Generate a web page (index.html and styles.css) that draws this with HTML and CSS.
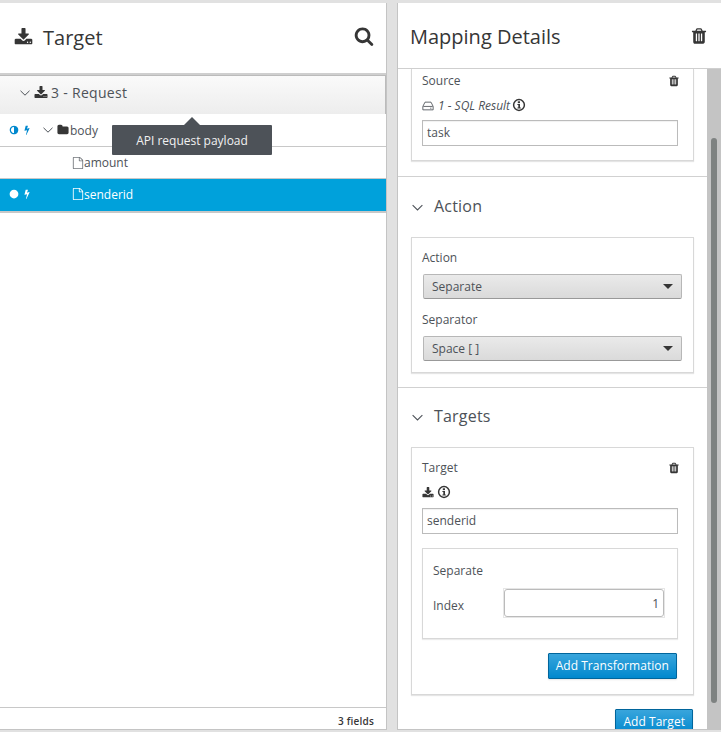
FILE: index.html
```html
<!DOCTYPE html>
<html lang="en">
<head>
  <meta charset="UTF-8">
  <title>Data Mapper</title>
  <link rel="stylesheet" href="styles.css">
</head>
<body>

<svg class="sprites" width="0" height="0">
  <symbol id="i-download" viewBox="0 0 1792 1792"><path d="M1344 1344q0-26-19-45t-45-19-45 19-19 45 19 45 45 19 45-19 19-45zm256 0q0-26-19-45t-45-19-45 19-19 45 19 45 45 19 45-19 19-45zm128-224v320q0 40-28 68t-68 28h-1472q-40 0-68-28t-28-68v-320q0-40 28-68t68-28h465l135 136q58 56 136 56t136-56l136-136h464q40 0 68 28t28 68zm-325-569q17 41-14 70l-448 448q-18 19-45 19t-45-19l-448-448q-31-29-14-70 17-39 59-39h256v-448q0-26 19-45t45-19h256q26 0 45 19t19 45v448h256q42 0 59 39z"/></symbol>
  <symbol id="i-search" viewBox="0 0 1792 1792"><path d="M1216 832q0-185-131.5-316.5t-316.5-131.5-316.5 131.5-131.5 316.5 131.5 316.5 316.5 131.5 316.5-131.5 131.5-316.5zm512 832q0 52-38 90t-90 38q-54 0-90-38l-343-342q-179 124-399 124-143 0-273.5-55.5t-225-150-150-225-55.5-273.5 55.5-273.5 150-225 225-150 273.5-55.5 273.5 55.5 225 150 150 225 55.5 273.5q0 220-124 399l343 343q37 37 37 90z"/></symbol>
  <symbol id="i-trash" viewBox="0 0 1792 1792"><path d="M704 1376v-704q0-14-9-23t-23-9h-64q-14 0-23 9t-9 23v704q0 14 9 23t23 9h64q14 0 23-9t9-23zm256 0v-704q0-14-9-23t-23-9h-64q-14 0-23 9t-9 23v704q0 14 9 23t23 9h64q14 0 23-9t9-23zm256 0v-704q0-14-9-23t-23-9h-64q-14 0-23 9t-9 23v704q0 14 9 23t23 9h64q14 0 23-9t9-23zm-544-992h448l-48-117q-7-9-17-11h-317q-10 2-17 11zm928 32v64q0 14-9 23t-23 9h-96v948q0 83-47 143.5t-113 60.5h-832q-66 0-113-58.5t-47-141.5v-952h-96q-14 0-23-9t-9-23v-64q0-14 9-23t23-9h309l70-167q15-37 54-63t79-26h320q40 0 79 26t54 63l70 167h309q14 0 23 9t9 23z"/></symbol>
  <symbol id="i-folder" viewBox="0 0 1792 1792"><path d="M1728 608v704q0 92-66 158t-158 66h-1216q-92 0-158-66t-66-158v-960q0-92 66-158t158-66h320q92 0 158 66t66 158v32h672q92 0 158 66t66 158z"/></symbol>
  <symbol id="i-bolt" viewBox="0 0 1792 1792"><path d="M1333 566q18 20 7 44l-540 1157q-13 25-42 25-4 0-14-2-17-5-25.5-19t-4.5-30l197-808-406 101q-4 1-12 1-18 0-31-11-18-15-13-39l201-825q4-14 16-23t28-9h328q19 0 32 12.5t13 29.5q0 8-5 18l-171 463 396-98q8-2 12-2 19 0 34 15z"/></symbol>
  <symbol id="i-half" viewBox="0 0 1792 1792"><path d="M896 1440v-1088q-148 0-273 73t-198 198-73 273 73 273 198 198 273 73zm768-544q0 209-103 385.5t-279.5 279.5-385.5 103-385.5-103-279.5-279.5-103-385.5 103-385.5 279.5-279.5 385.5-103 385.5 103 279.5 279.5 103 385.5z"/></symbol>
  <symbol id="i-file" viewBox="0 0 1792 1792"><path d="M1596 380q28 28 48 76t20 88v1152q0 40-28 68t-68 28h-1344q-40 0-68-28t-28-68v-1600q0-40 28-68t68-28h896q40 0 88 20t76 48zm-444-244v376h376q-10-29-22-41l-313-313q-12-12-41-22zm384 1528v-1024h-416q-40 0-68-28t-28-68v-416h-768v1536h1280z"/></symbol>
  <symbol id="i-circle" viewBox="0 0 16 16"><circle cx="8" cy="8" r="7"/></symbol>
  <symbol id="i-info" viewBox="0 0 14 14"><circle cx="7" cy="7" r="5.4" fill="none" stroke="currentColor" stroke-width="1.5"/><rect x="5.8" y="3.3" width="2.2" height="1.8"/><path d="M5.4 6h2.6v3.4h.8v1H5.400v-1h.9V7h-.9z"/></symbol>
  <symbol id="i-hdd" viewBox="0 0 14 14"><path d="M3.5 2.500h7L13 7.500v4h-12v-4zM1.500 7.500h11M9.500 9.500h1.500" fill="none" stroke="currentColor" stroke-width="1"/></symbol>
  <symbol id="i-angle" viewBox="0 0 12 12"><path d="M1.500 3.800 6 8.200l4.500-4.400" fill="none" stroke="currentColor" stroke-width="1"/></symbol>
</svg>

<div class="layout">

  <section class="panel target-panel">
    <header class="panel-head target-head">
      <svg class="icon head-icon"><use href="#i-download"/></svg>
      <h1>Target</h1>
      <svg class="icon search-icon"><use href="#i-search"/></svg>
    </header>

    <div class="tree">
      <div class="doc-row">
        <svg class="icon angle-sm"><use href="#i-angle"/></svg>
        <svg class="icon doc-icon"><use href="#i-download"/></svg>
        <span>3 - Request</span>
      </div>

      <div class="field-row body-row">
        <svg class="icon status blue"><use href="#i-half"/></svg>
        <svg class="icon bolt blue"><use href="#i-bolt"/></svg>
        <svg class="icon angle-sm body-angle"><use href="#i-angle"/></svg>
        <svg class="icon folder"><use href="#i-folder"/></svg>
        <span>body</span>
      </div>

      <div class="field-row leaf">
        <svg class="icon file"><use href="#i-file"/></svg>
        <span>amount</span>
      </div>

      <div class="field-row selected">
        <svg class="icon status dot"><use href="#i-circle"/></svg>
        <svg class="icon bolt"><use href="#i-bolt"/></svg>
        <svg class="icon file leaf-file"><use href="#i-file"/></svg>
        <span>senderid</span>
      </div>

      <div class="tooltip">API request payload</div>
    </div>

    <footer class="tree-foot">3 fields</footer>
  </section>

  <section class="panel details-panel">
    <header class="panel-head details-head">
      <h1>Mapping Details</h1>
      <svg class="icon head-trash"><use href="#i-trash"/></svg>
    </header>

    <div class="details-body">
      <div class="details-scroll">

        <div class="group group-source">
          <div class="card card-source">
            <div class="card-title">
              <span>Source</span>
              <svg class="icon card-trash"><use href="#i-trash"/></svg>
            </div>
            <div class="doc-line">
              <svg class="icon hdd"><use href="#i-hdd"/></svg>
              <em>1 - SQL Result</em>
              <svg class="icon info"><use href="#i-info"/></svg>
            </div>
            <input class="text-field" type="text" value="task">
          </div>
        </div>

        <div class="group">
          <h2><svg class="icon angle-lg"><use href="#i-angle"/></svg>Action</h2>
          <div class="card card-action">
            <label>Action</label>
            <div class="select"><span>Separate</span><i class="caret"></i></div>
            <label class="label-gap">Separator</label>
            <div class="select"><span>Space [ ]</span><i class="caret"></i></div>
          </div>
        </div>

        <div class="group group-targets">
          <h2><svg class="icon angle-lg"><use href="#i-angle"/></svg>Targets</h2>
          <div class="card card-target">
            <div class="card-title">
              <span>Target</span>
              <svg class="icon card-trash"><use href="#i-trash"/></svg>
            </div>
            <div class="doc-line target-line">
              <svg class="icon dl-small"><use href="#i-download"/></svg>
              <svg class="icon info"><use href="#i-info"/></svg>
            </div>
            <input class="text-field" type="text" value="senderid">

            <div class="transform">
              <div class="transform-name">Separate</div>
              <div class="transform-row">
                <label>Index</label>
                <div class="num-wrap"><input class="num-field" type="text" value="1"></div>
              </div>
            </div>

            <div class="btn-row"><button class="btn">Add Transformation</button></div>
          </div>
          <div class="btn-row target-btn"><button class="btn">Add Target</button></div>
        </div>

      </div>

      <div class="scrollbar"><div class="thumb"></div></div>
    </div>
  </section>

</div>

</body>
</html>
```

FILE: styles.css
```css
html, body {
  height: 100%;
}
body {
  margin: 0;
  background: #e1e1e1;
  color: #363636;
  font-family: 'Open Sans', sans-serif;
  font-size: 12px;
  overflow: hidden;
}
.sprites {
  position: absolute;
}
.icon {
  display: block;
  flex: none;
  fill: currentColor;
}
.layout {
  display: flex;
  height: 732px;
  box-sizing: border-box;
  padding: 3px 0 2px;
  gap: 10px;
}
.panel {
  display: flex;
  flex-direction: column;
  background: white;
  box-sizing: border-box;
  border-bottom: 1px solid #c4c4c4;
}
.target-panel {
  width: 387px;
  border-right: 1px solid #c4c4c4;
}
.details-panel {
  width: 324px;
  border-left: 1px solid #c4c4c4;
}
.panel-head {
  display: flex;
  align-items: center;
  flex: none;
}
h1 {
  margin: 0;
  font-size: 20px;
  font-weight: 400;
  color: #363636;
}
.target-head {
  height: 72px;
  padding: 0 12px 2px 14px;
  border-bottom: 2px solid #cfcfcf;
  box-sizing: border-box;
}
.head-icon {
  width: 19px;
  height: 19px;
  margin-right: 10px;
}
.search-icon {
  width: 20px;
  height: 20px;
  margin-left: auto;
  margin-top: -2px;
}

/* tree */
.tree {
  position: relative;
  flex: 1;
}
.doc-row {
  display: flex;
  align-items: center;
  height: 39px;
  box-sizing: border-box;
  padding: 0 0 5px 19px;
  font-size: 14px;
  letter-spacing: 0.3px;
  color: #4d5258;
  background: linear-gradient(#fafafa, #ededed);
  border: 1px solid #bbb;
  border-bottom: none;
  border-left: none;
}
.angle-sm {
  width: 12px;
  height: 12px;
}
.doc-icon {
  width: 14px;
  height: 14px;
  margin: 0 3px;
  color: #363636;
}
.field-row {
  display: flex;
  align-items: center;
  height: 32px;
  box-sizing: border-box;
  color: #4d5258;
  border-bottom: 1px solid #c8c8c8;
}
.body-row {
  height: 33px;
}
.status {
  width: 10px;
  height: 10px;
  margin-left: 9px;
}
.bolt {
  width: 10px;
  height: 10px;
  margin-left: 3px;
}
.blue {
  color: #0088ce;
}
.body-angle {
  margin-left: 10px;
}
.folder {
  width: 12px;
  height: 12px;
  margin: 0 1px 0 3px;
  color: #363636;
}
.leaf {
  padding-left: 72px;
}
.file {
  width: 12px;
  height: 12px;
  color: #72767b;
}
.leaf-file {
  margin-left: 40px;
  color: white;
}
.selected {
  background: #00a1db;
  color: white;
  border-bottom: 2px solid #c8c8c8;
  height: 34px;
  padding-bottom: 2px;
}
.dot {
  color: white;
}
.tooltip {
  position: absolute;
  left: 112px;
  top: 50px;
  width: 160px;
  height: 30px;
  line-height: 31px;
  text-align: center;
  background: #4d5258;
  color: #f1f1f1;
  border-radius: 1px;
}
.tooltip::before {
  content: "";
  position: absolute;
  left: 72px;
  top: -8px;
  border-left: 8px solid transparent;
  border-right: 8px solid transparent;
  border-bottom: 8px solid #4d5258;
}
.tree-foot {
  flex: none;
  height: 21px;
  line-height: 27px;
  padding-right: 12px;
  text-align: right;
  font-size: 10px;
  font-weight: 600;
  letter-spacing: 0.2px;
  border-top: 1px solid #c8c8c8;
}

/* details */
.details-head {
  justify-content: space-between;
  height: 66px;
  padding: 2px 13px 0 12px;
  border-bottom: 1px solid #cfcfcf;
  box-sizing: border-box;
}
.head-trash {
  width: 18px;
  height: 18px;
  margin-top: -2px;
}
.details-body {
  display: flex;
  flex: 1;
  min-height: 0;
}
.details-scroll {
  flex: 1;
  min-width: 0;
  overflow: hidden;
}
.scrollbar {
  flex: none;
  width: 14px;
  padding: 69px 4px 26px;
  box-sizing: border-box;
  background: #c4c4c4;
}
.thumb {
  height: 100%;
  background: #7e8281;
  border-radius: 3px;
}
.group {
  padding: 0 13px 14px;
  border-bottom: 1px solid #d1d1d1;
}
.group-source {
  padding-bottom: 15px;
}
.group-targets {
  border-bottom: none;
}
h2 {
  display: flex;
  align-items: center;
  box-sizing: border-box;
  margin: 0;
  height: 60px;
  padding-bottom: 2px;
  font-size: 16px;
  font-weight: 400;
  letter-spacing: 0.2px;
  color: #4d5258;
}
.group-targets h2 {
  height: 59px;
  padding-bottom: 3px;
}
.angle-lg {
  width: 13px;
  height: 13px;
  margin-right: 10px;
  margin-top: 2px;
}
.card {
  border: 1px solid #d8d8d8;
  box-shadow: 0 1px 1px rgba(0,0,0,0.1);
  padding: 10px;
  background: white;
  color: #4d5258;
}
.card-source {
  border-top: none;
  padding-top: 3px;
  height: 92px;
  box-sizing: border-box;
}
.card-title {
  display: flex;
  justify-content: space-between;
  align-items: center;
  height: 17px;
}
.card-trash {
  width: 12px;
  height: 12px;
  color: #363636;
  margin-right: 3px;
}
.doc-line {
  display: flex;
  align-items: center;
  gap: 4px;
  height: 17px;
  margin: 8px 0 6px;
}
.doc-line em {
  font-size: 12px;
}
.hdd {
  width: 12px;
  height: 12px;
  color: #4d5258;
}
.info {
  width: 14px;
  height: 14px;
  color: #363636;
  margin-left: -2px;
  margin-top: -2px;
}
.text-field {
  display: block;
  width: 256px;
  height: 26px;
  box-sizing: border-box;
  margin: 0;
  padding: 0 4px 1px;
  border: 1px solid #bbb;
  border-radius: 0;
  font: 12px 'Open Sans', sans-serif;
  color: #4d5258;
  box-shadow: inset 0 1px 1px rgba(0,0,0,0.06);
  outline: none;
}
.card-action {
  padding-top: 11px;
  height: 136px;
  box-sizing: border-box;
}
.card-action label {
  display: block;
  height: 17px;
  line-height: 17px;
}
.label-gap {
  margin-top: 12px;
}
.select {
  display: flex;
  justify-content: space-between;
  align-items: center;
  width: 259px;
  height: 25px;
  margin: 8px 0 0 1px;
  padding: 0 8px;
  box-sizing: border-box;
  background: linear-gradient(#eaeaea, #dadada);
  border: 1px solid #b7b7b7;
  border-bottom-color: #999;
  border-radius: 2px;
}
.caret {
  border-left: 5px solid transparent;
  border-right: 5px solid transparent;
  border-top: 5px solid #363636;
}
.card-target {
  height: 248px;
  box-sizing: border-box;
  padding-top: 11px;
}
.target-line {
  margin: 9px 0 8px;
  gap: 5px;
  height: 15px;
}
.dl-small {
  width: 12px;
  height: 12px;
  color: #363636;
}
.transform {
  width: 256px;
  height: 91px;
  box-sizing: border-box;
  margin-top: 14px;
  padding: 13px 10px 0;
  border: 1px solid #d8d8d8;
  box-shadow: 0 1px 1px rgba(0,0,0,0.08);
}
.transform-name {
  height: 17px;
  line-height: 17px;
}
.transform-row {
  display: flex;
  align-items: flex-start;
  justify-content: space-between;
  margin-top: 18px;
}
.transform-row label {
  line-height: 17px;
}
.num-wrap {
  margin-top: -9px;
  margin-right: 2px;
  border: 1px solid #e6e6e6;
}
.num-field {
  display: block;
  width: 160px;
  height: 28px;
  box-sizing: border-box;
  margin: 0;
  padding: 0 4px;
  text-align: right;
  border: 1px solid #bbb;
  border-radius: 3px;
  font: 12px 'Open Sans', sans-serif;
  color: #4d5258;
  outline: none;
}
.btn-row {
  display: flex;
  justify-content: flex-end;
  width: 255px;
  margin-top: 14px;
}
.target-btn {
  width: auto;
  margin-top: 14px;
  padding-right: 1px;
}
.btn {
  height: 26px;
  padding: 0 7px 2px;
  font: 12px 'Open Sans', sans-serif;
  letter-spacing: 0.05px;
  color: white;
  background: linear-gradient(#39a5dc, #0088ce);
  border: 1px solid #00659c;
  border-radius: 1px;
  box-shadow: 0 1px 2px rgba(0,0,0,0.1);
}
```
